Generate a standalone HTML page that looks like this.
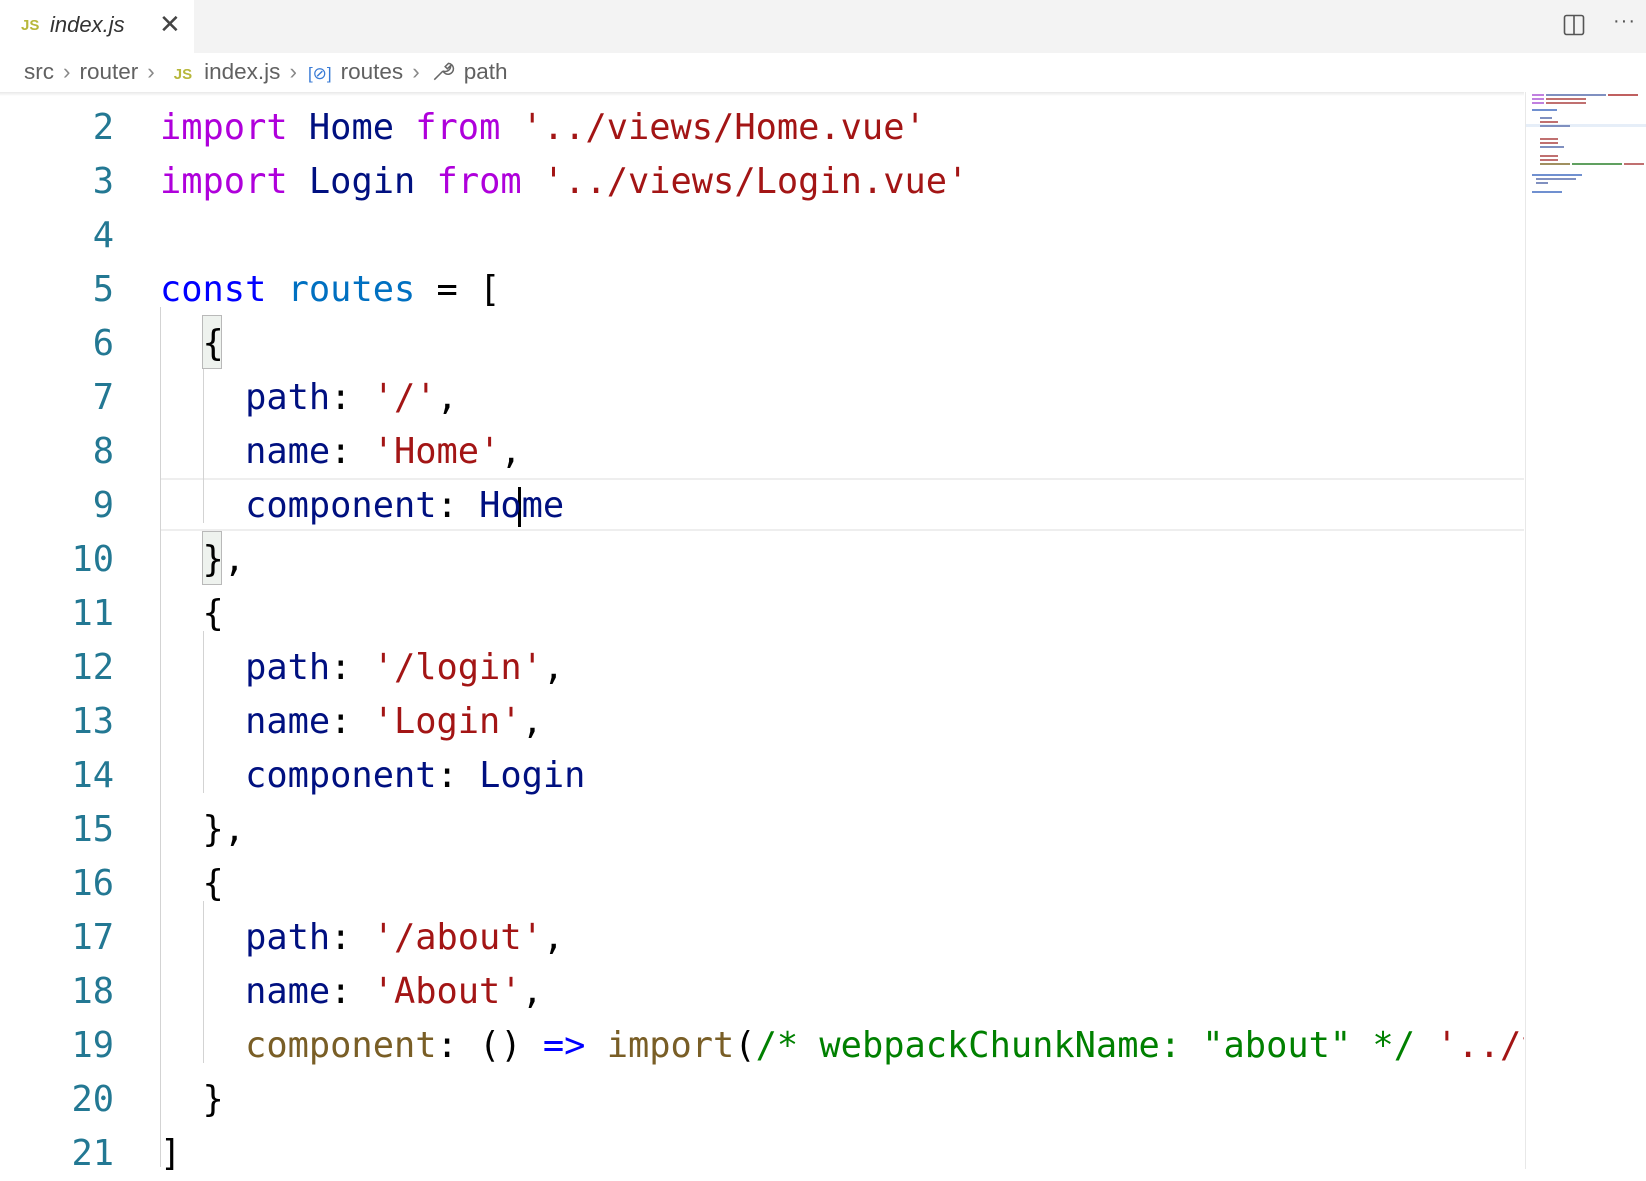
<!DOCTYPE html>
<html><head><meta charset="utf-8"><style>
*{margin:0;padding:0;box-sizing:border-box}
body{width:1646px;height:1169px;background:#fff;position:relative;overflow:hidden;font-family:"Liberation Sans",sans-serif}
.tabbar{position:absolute;left:0;top:0;width:1646px;height:53px;background:#f3f3f3}
.tab{position:absolute;left:0;top:0;width:194px;height:53px;background:#fff}
.tab .js{position:absolute;left:21px;top:17px;font-size:15px;color:#b7b73b;font-weight:bold}
.tab .nm{position:absolute;left:50px;top:12px;font-size:22px;font-style:italic;color:#333}
.tab .x{position:absolute;left:159px;top:9px;font-size:26px;color:#444}
.crumb{position:absolute;left:24px;top:59px;font-size:22.5px;color:#616161;white-space:nowrap}
.crumb .s{color:#888;margin:0 9px}
.crumb .js{color:#b7b73b;font-size:15px;font-weight:bold;margin:0 12px 0 10px}
.ed{position:absolute;left:0;top:92px;width:1524px;height:1077px}
.shadow{position:absolute;left:0;top:92px;width:1524px;height:4px;background:linear-gradient(#e8e8e8,#fff)}
.line{position:absolute;left:0;height:54px;width:1524px;font-family:"DejaVu Sans Mono","Liberation Mono",monospace;font-size:35.35px;line-height:54px;white-space:pre}
.ln{position:absolute;right:1410px;color:#237893;text-align:right}
.cd{position:absolute;left:160px;color:#000}
.k{color:#af00db}.v{color:#001080}.s1{color:#a31515}.b{color:#0000ff}.r{color:#0070c1}.f{color:#795e26}.c{color:#008000}
.guide{position:absolute;width:1px;background:#d3d3d3}
.mm{position:absolute;left:1525px;top:92px;width:121px;height:1077px;border-left:1px solid #e8e8e8}
.mm div{position:absolute;height:2px}
</style></head><body>
<div class="tabbar"><div class="tab"><span class="js">JS</span><span class="nm">index.js</span><span class="x">✕</span></div>
<svg style="position:absolute;left:1563px;top:14px" width="22" height="22" viewBox="0 0 22 22"><rect x="1.5" y="1.5" width="19" height="19" rx="2" fill="none" stroke="#555" stroke-width="1.6"/><line x1="11" y1="2" x2="11" y2="20" stroke="#555" stroke-width="1.6"/></svg>
<span style="position:absolute;left:1613px;top:10px;font-size:20px;color:#555;letter-spacing:1px">···</span>
</div>
<div class="crumb">src<span class="s">›</span>router<span class="s">›</span><span class="js">JS</span>index.js<span class="s">›</span><span style="color:#3a7bd5;font-size:17px;margin:0 9px 0 2px">[⊘]</span>routes<span class="s">›</span><svg width="24" height="24" viewBox="0 0 22 22" style="vertical-align:-4px;margin:0 9px 0 2px"><path d="M3 19 L11 11 M11 11 A5 5 0 1 0 16 4 L13 7 L15 9 L18 6 A5 5 0 0 1 11 11" fill="none" stroke="#666" stroke-width="1.4"/></svg>path</div>
<div class="shadow"></div>
<div class="ed">
<div style="position:absolute;left:160px;top:386px;width:1364px;height:53px;border-top:2px solid #eeeeee;border-bottom:2px solid #eeeeee"></div>
<div class="guide" style="left:160px;top:215px;height:860px"></div>
<div class="guide" style="left:203px;top:269px;height:162px"></div>
<div class="guide" style="left:203px;top:539px;height:162px"></div>
<div class="guide" style="left:203px;top:809px;height:162px"></div>
<div style="position:absolute;left:202px;top:223px;width:20px;height:54px;border:1px solid #b9b9b9;background:#eef2ee"></div>
<div style="position:absolute;left:202px;top:439px;width:20px;height:54px;border:1px solid #b9b9b9;background:#eef2ee"></div>
<div style="position:absolute;left:518px;top:395px;width:3px;height:40px;background:#000"></div>
</div>
<div style="position:absolute;left:0;top:101px">
<div class="line" style="top:0"><span class="ln">2</span><span class="cd"><span class="k">import</span> <span class="v">Home</span> <span class="k">from</span> <span class="s1">'../views/Home.vue'</span></span></div>
<div class="line" style="top:54px"><span class="ln">3</span><span class="cd"><span class="k">import</span> <span class="v">Login</span> <span class="k">from</span> <span class="s1">'../views/Login.vue'</span></span></div>
<div class="line" style="top:108px"><span class="ln">4</span></div>
<div class="line" style="top:162px"><span class="ln">5</span><span class="cd"><span class="b">const</span> <span class="r">routes</span> = [</span></div>
<div class="line" style="top:216px"><span class="ln">6</span><span class="cd">  {</span></div>
<div class="line" style="top:270px"><span class="ln">7</span><span class="cd">    <span class="v">path</span>: <span class="s1">'/'</span>,</span></div>
<div class="line" style="top:324px"><span class="ln">8</span><span class="cd">    <span class="v">name</span>: <span class="s1">'Home'</span>,</span></div>
<div class="line" style="top:378px"><span class="ln">9</span><span class="cd">    <span class="v">component</span>: <span class="v">Home</span></span></div>
<div class="line" style="top:432px"><span class="ln">10</span><span class="cd">  },</span></div>
<div class="line" style="top:486px"><span class="ln">11</span><span class="cd">  {</span></div>
<div class="line" style="top:540px"><span class="ln">12</span><span class="cd">    <span class="v">path</span>: <span class="s1">'/login'</span>,</span></div>
<div class="line" style="top:594px"><span class="ln">13</span><span class="cd">    <span class="v">name</span>: <span class="s1">'Login'</span>,</span></div>
<div class="line" style="top:648px"><span class="ln">14</span><span class="cd">    <span class="v">component</span>: <span class="v">Login</span></span></div>
<div class="line" style="top:702px"><span class="ln">15</span><span class="cd">  },</span></div>
<div class="line" style="top:756px"><span class="ln">16</span><span class="cd">  {</span></div>
<div class="line" style="top:810px"><span class="ln">17</span><span class="cd">    <span class="v">path</span>: <span class="s1">'/about'</span>,</span></div>
<div class="line" style="top:864px"><span class="ln">18</span><span class="cd">    <span class="v">name</span>: <span class="s1">'About'</span>,</span></div>
<div class="line" style="top:918px;overflow:hidden"><span class="ln">19</span><span class="cd">    <span class="f">component</span>: () <span class="b">=&gt;</span> <span class="f">import</span>(<span class="c">/* webpackChunkName: "about" */</span> <span class="s1">'../views/About.vue'</span>)</span></div>
<div class="line" style="top:972px"><span class="ln">20</span><span class="cd">  }</span></div>
<div class="line" style="top:1026px"><span class="ln">21</span><span class="cd">]</span></div>
</div>
<div class="mm">
<div style="left:6px;top:2px;width:12px;background:#c080e0"></div><div style="left:20px;top:2px;width:60px;background:#8090c0"></div><div style="left:82px;top:2px;width:30px;background:#c06060"></div>
<div style="left:6px;top:6px;width:12px;background:#c080e0"></div><div style="left:20px;top:6px;width:40px;background:#c07070"></div>
<div style="left:6px;top:10px;width:12px;background:#c080e0"></div><div style="left:20px;top:10px;width:40px;background:#c07070"></div>
<div style="left:6px;top:17px;width:25px;background:#7090d0"></div>
<div style="left:14px;top:25px;width:12px;background:#8090c0"></div>
<div style="left:14px;top:29px;width:18px;background:#c07070"></div>
<div style="left:0;top:32px;width:121px;height:3px;background:#e6eef8"></div>
<div style="left:14px;top:33px;width:30px;background:#8090c0"></div>
<div style="left:14px;top:46px;width:18px;background:#c07070"></div>
<div style="left:14px;top:50px;width:18px;background:#c07070"></div>
<div style="left:14px;top:54px;width:24px;background:#8090c0"></div>
<div style="left:14px;top:63px;width:18px;background:#c07070"></div>
<div style="left:14px;top:67px;width:18px;background:#c07070"></div>
<div style="left:14px;top:71px;width:30px;background:#a09060"></div><div style="left:46px;top:71px;width:50px;background:#60a060"></div><div style="left:98px;top:71px;width:20px;background:#c07070"></div>
<div style="left:6px;top:82px;width:50px;background:#7090d0"></div>
<div style="left:10px;top:86px;width:40px;background:#8090c0"></div>
<div style="left:10px;top:90px;width:12px;background:#8090c0"></div>
<div style="left:6px;top:99px;width:30px;background:#7090d0"></div>
</div>
</body></html>
